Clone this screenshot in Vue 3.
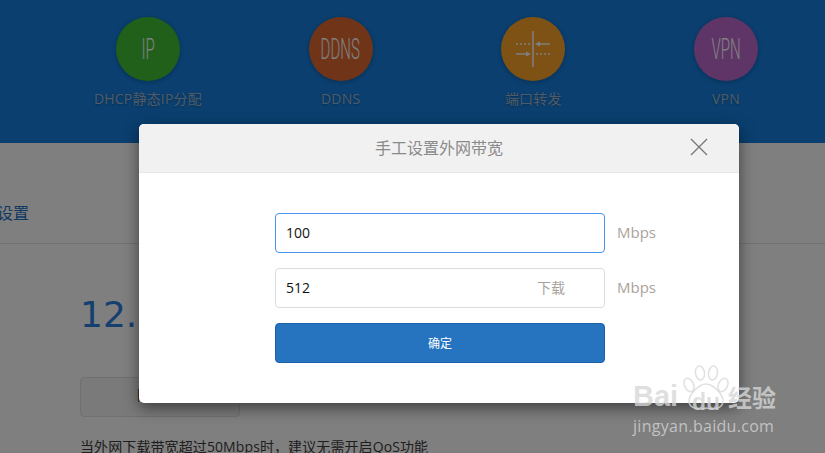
<script setup>
const tiles = [
  { label: 'DHCP静态IP分配', mark: 'IP', color: 'green' },
  { label: 'DDNS', mark: 'DDNS', color: 'brown' },
  { label: '端口转发', mark: '', color: 'orange' },
  { label: 'VPN', mark: 'VPN', color: 'purple' },
]
</script>

<template>
  <div class="page">
    <header class="top">
      <div v-for="t in tiles" :key="t.label" class="tile">
        <div class="circle" :class="t.color">
          <span v-if="t.mark" class="mark">{{ t.mark }}</span>
          <svg v-else width="64" height="64" viewBox="0 0 64 64" fill="none" stroke="#fff" stroke-opacity=".95">
            <path d="M32 14V50" stroke-width="1.6" />
            <path d="M15 27H29M35 37H49" stroke-width="1.4" stroke-dasharray="2 2" />
            <path d="M37 27H49M15 37H27" stroke-width="1.6" />
            <path d="M34 27L39 24.5V29.5ZM30 37L25 34.5V39.5Z" fill="#fff" stroke="none" />
          </svg>
        </div>
        <div class="label">{{ t.label }}</div>
      </div>
    </header>

    <nav class="tabs"><span class="tab">设置</span></nav>

    <main class="content">
      <div class="speed">12.5</div>
      <button class="ghost">限速值</button>
      <p class="note">当外网下载带宽超过50Mbps时，建议无需开启QoS功能</p>
    </main>

    <div class="overlay">
      <section class="modal">
        <div class="modal-head">
          <h2>手工设置外网带宽</h2>
          <svg class="close" width="18" height="18" viewBox="0 0 18 18" fill="none" stroke="#777" stroke-width="1.3">
            <path d="M1 1L17 17M17 1L1 17" />
          </svg>
        </div>
        <div class="modal-body">
          <div class="row">
            <div class="field focus"><span class="value">100</span></div>
            <span class="unit">Mbps</span>
          </div>
          <div class="row">
            <div class="field"><span class="value">512</span><span class="hint">下载</span></div>
            <span class="unit">Mbps</span>
          </div>
          <button class="confirm">确定</button>
        </div>
      </section>
    </div>

    <div class="mark-baidu">
      <div class="brand">
        <span class="bai">Bai</span>
        <svg class="paw" width="46" height="46" viewBox="0 0 46 46" fill="none" stroke-width="1.5">
          <ellipse cx="6" cy="20" rx="4.5" ry="7" transform="rotate(-25 6 20)" />
          <ellipse cx="17" cy="8" rx="4.5" ry="7" transform="rotate(-8 17 8)" />
          <ellipse cx="30" cy="8" rx="4.5" ry="7" transform="rotate(8 30 8)" />
          <ellipse cx="40" cy="20" rx="4.5" ry="7" transform="rotate(25 40 20)" />
          <path d="M23 19C30 19 40 29 40 36C40 44 30 45 23 43C16 45 6 44 6 36C6 29 16 19 23 19Z" />
        </svg>
        <span class="du">du</span>
        <span class="jy">经验</span>
      </div>
      <div class="url">jingyan.baidu.com</div>
    </div>
  </div>
</template>

<style>
html, body { margin: 0; overflow: hidden; background: #fff; }
</style>

<style scoped>
.page {
  position: relative;
  width: 825px;
  height: 453px;
  overflow: hidden;
  background: #fff;
  font-family: "Open Sans", "Noto Sans CJK SC", sans-serif;
}
.top {
  display: flex;
  height: 143px;
  box-sizing: border-box;
  padding: 17px 0 0 51.67px;
  background: #147ede;
}
.tile {
  flex: 0 0 192.67px;
  display: flex;
  flex-direction: column;
  align-items: center;
}
.circle {
  display: flex;
  align-items: center;
  justify-content: center;
  width: 64px;
  height: 64px;
  border-radius: 50%;
  box-shadow: 0 1px 4px rgba(0, 0, 0, .25);
}
.green { background: #42c034; }
.brown { background: #e06832; }
.orange { background: #faa428; }
.purple { background: #be6ad0; }
.mark {
  display: block;
  color: #fff;
  font: 300 30px/1 Roboto, sans-serif;
  transform: scaleX(.5);
  white-space: nowrap;
}
.label {
  margin-top: 9px;
  font-size: 14px;
  line-height: 18px;
  letter-spacing: .2px;
  color: #9fb8cf;
  text-shadow: 0 1px 2px rgba(0, 0, 0, .25);
  white-space: nowrap;
}
.tabs {
  height: 101px;
  box-sizing: border-box;
  padding-top: 58px;
  border-bottom: 1px solid #e4e4e4;
}
.tab {
  display: block;
  margin-left: -3px;
  font-size: 16px;
  line-height: 24px;
  color: #1f70c4;
}
.content {
  padding: 46px 0 0 80px;
}
.speed {
  font: 36px/50px "DejaVu Sans", sans-serif;
  color: #2a7fdc;
}
.ghost {
  display: block;
  width: 160px;
  height: 40px;
  margin-top: 37px;
  padding: 0 4px 6px 0;
  border: 1px solid #e0e0e0;
  border-radius: 4px;
  background: #f4f4f4;
  font: 14px "Open Sans", "Noto Sans CJK SC", sans-serif;
  color: #222;
}
.note {
  margin: 20px 0 0;
  font-size: 14px;
  line-height: 20px;
  letter-spacing: .1px;
  color: #3c3c3c;
  white-space: nowrap;
}
.overlay {
  position: absolute;
  inset: 0;
  padding: 124px 0 0 139px;
  background: rgba(0, 0, 0, .5);
}
.modal {
  width: 600px;
  height: 279px;
  border-radius: 5px;
  overflow: hidden;
  background: #fff;
  box-shadow: 0 5px 15px rgba(0, 0, 0, .5);
}
.modal-head {
  display: flex;
  align-items: center;
  justify-content: center;
  position: relative;
  height: 49px;
  box-sizing: border-box;
  padding-bottom: 2px;
  background: #f1f1f1;
  border-bottom: 1px solid #e6e6e6;
}
.modal-head h2 {
  margin: 0;
  font-size: 16px;
  font-weight: 400;
  color: #8a8a8a;
}
.close {
  position: absolute;
  left: 551px;
  top: 14px;
}
.modal-body {
  display: flex;
  flex-direction: column;
  gap: 15px;
  padding: 40px 0 0 136px;
}
.row {
  display: flex;
  align-items: center;
  gap: 12px;
}
.field {
  display: flex;
  align-items: center;
  justify-content: space-between;
  width: 330px;
  height: 40px;
  box-sizing: border-box;
  padding: 0 39px 2px 10px;
  border: 1px solid #dcdcdc;
  border-radius: 4px;
  background: #fff;
}
.field.focus { border-color: #4d94f0; }
.value {
  font-size: 14px;
  color: #111;
}
.hint {
  font-size: 14px;
  color: #a8a29c;
}
.unit {
  padding-bottom: 2px;
  font-size: 15px;
  color: #aaa39d;
}
.confirm {
  width: 330px;
  height: 40px;
  padding: 0;
  border: 1px solid #1b61aa;
  border-radius: 4px;
  background: #2673c0;
  color: #fff;
  font: 12px "Open Sans", "Noto Sans CJK SC", sans-serif;
}
.mark-baidu {
  position: absolute;
  left: 633px;
  top: 365px;
  width: 150px;
  color: rgba(215, 215, 215, .78);
}
.brand {
  position: relative;
  height: 50px;
}
.bai, .du, .jy {
  position: absolute;
  top: 16px;
  font: 700 29px/30px "Liberation Sans", sans-serif;
  white-space: nowrap;
}
.bai { left: 0; }
.du { left: 59px; top: 24px; font-size: 23px; line-height: 26px; }
.jy { left: 95px; top: 17px; font: 700 24px/30px "Noto Sans CJK SC", sans-serif; }
.paw {
  position: absolute;
  left: 50px;
  top: 0;
  stroke: rgba(215, 215, 215, .78);
}
.url {
  margin-top: 1px;
  font: 16px/20px "Open Sans", sans-serif;
  letter-spacing: .3px;
  white-space: nowrap;
}
</style>
